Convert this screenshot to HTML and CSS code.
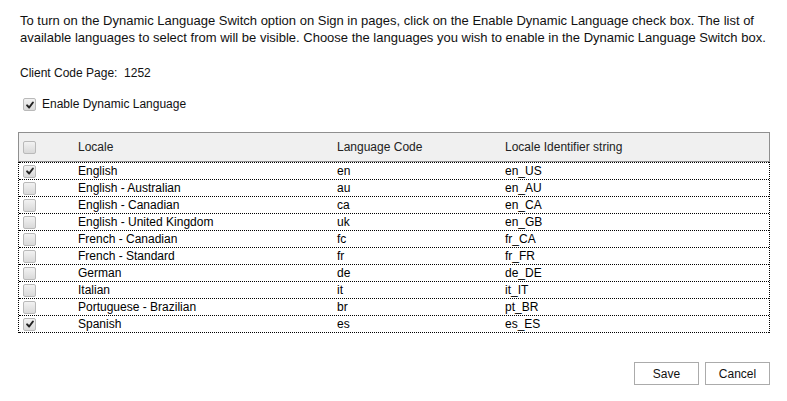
FILE: index.html
```html
<!DOCTYPE html>
<html>
<head>
<meta charset="utf-8">
<link rel="stylesheet" href="styles.css">
</head>
<body>
<div class="page">
  <p class="intro">To turn on the Dynamic Language Switch option on Sign in pages, click on the Enable Dynamic Language check box. The list of<br>available languages to select from will be visible. Choose the languages you wish to enable in the Dynamic Language Switch box.</p>
  <div class="codepage">Client Code Page:&nbsp; 1252</div>
  <label class="enable"><span class="cb checked"><svg viewBox="0 0 12 12"><path d="M2.5 6.5 L5 9 L9.5 3" /></svg></span>Enable Dynamic Language</label>

  <div class="table">
    <div class="thead">
      <div class="cell"><span class="cb"></span></div>
      <div class="cell">Locale</div>
      <div class="cell">Language Code</div>
      <div class="cell">Locale Identifier string</div>
    </div>
    <div class="tbody">
      <div class="row"><div class="cell"><span class="cb checked"><svg viewBox="0 0 12 12"><path d="M2.5 6.5 L5 9 L9.5 3" /></svg></span></div><div class="cell">English</div><div class="cell">en</div><div class="cell">en_US</div></div>
      <div class="row"><div class="cell"><span class="cb"></span></div><div class="cell">English - Australian</div><div class="cell">au</div><div class="cell">en_AU</div></div>
      <div class="row"><div class="cell"><span class="cb"></span></div><div class="cell">English - Canadian</div><div class="cell">ca</div><div class="cell">en_CA</div></div>
      <div class="row"><div class="cell"><span class="cb"></span></div><div class="cell">English - United Kingdom</div><div class="cell">uk</div><div class="cell">en_GB</div></div>
      <div class="row"><div class="cell"><span class="cb"></span></div><div class="cell">French - Canadian</div><div class="cell">fc</div><div class="cell">fr_CA</div></div>
      <div class="row"><div class="cell"><span class="cb"></span></div><div class="cell">French - Standard</div><div class="cell">fr</div><div class="cell">fr_FR</div></div>
      <div class="row"><div class="cell"><span class="cb"></span></div><div class="cell">German</div><div class="cell">de</div><div class="cell">de_DE</div></div>
      <div class="row"><div class="cell"><span class="cb"></span></div><div class="cell">Italian</div><div class="cell">it</div><div class="cell">it_IT</div></div>
      <div class="row"><div class="cell"><span class="cb"></span></div><div class="cell">Portuguese - Brazilian</div><div class="cell">br</div><div class="cell">pt_BR</div></div>
      <div class="row"><div class="cell"><span class="cb checked"><svg viewBox="0 0 12 12"><path d="M2.5 6.5 L5 9 L9.5 3" /></svg></span></div><div class="cell">Spanish</div><div class="cell">es</div><div class="cell">es_ES</div></div>
    </div>
  </div>

  <div class="actions">
    <button class="btn">Save</button>
    <button class="btn">Cancel</button>
  </div>
</div>
</body>
</html>
```
FILE: styles.css
```css
html, body {
  margin: 0;
  padding: 0;
  background: #fff;
}
body {
  font-family: "Liberation Sans", Arial, sans-serif;
  color: #000;
}
.page {
  width: 787px;
  padding: 0 18px 0 18px;
  box-sizing: border-box;
}
.intro {
  margin: 0;
  padding: 12px 0 0 2px;
  font-size: 13px;
  line-height: 17px;
  color: #111;
  white-space: nowrap;
}
.codepage {
  margin-top: 20px;
  padding-left: 2px;
  font-size: 12px;
  line-height: 15px;
  color: #111;
}
.enable {
  display: flex;
  align-items: center;
  gap: 6px;
  margin-top: 16px;
  padding-left: 5px;
  font-size: 12px;
  line-height: 15px;
  color: #111;
}
.cb {
  display: inline-flex;
  align-items: center;
  justify-content: center;
  width: 11px;
  height: 11px;
  border: 1px solid #b9b9b9;
  border-radius: 2px;
  background: linear-gradient(#f2f2f2, #d9d9d9);
  box-sizing: content-box;
}
.cb svg {
  width: 10px;
  height: 10px;
}
.cb svg path {
  fill: none;
  stroke: #222;
  stroke-width: 2.4;
  stroke-linecap: round;
  stroke-linejoin: round;
}
.table {
  margin-top: 20px;
  width: 752px;
}
.thead {
  display: grid;
  grid-template-columns: 59px 259px 168px 1fr;
  height: 28px;
  align-items: center;
  background: #f0f0f0;
  border: 1px solid #8f8f8f;
  font-size: 12px;
  color: #222;
}
.thead .cell:first-child {
  padding-left: 4px;
  display: flex;
}
.tbody {
  border-left: 1px dotted #000;
  border-right: 1px dotted #000;
}
.row {
  display: grid;
  grid-template-columns: 59px 259px 168px 1fr;
  height: 16px;
  align-items: center;
  border-top: 1px dotted #000;
  font-size: 12px;
  color: #000;
}
.row:last-child {
  border-bottom: 1px dotted #000;
}
.row .cell:first-child {
  padding-left: 4px;
  display: flex;
}
.actions {
  display: flex;
  justify-content: flex-end;
  gap: 6px;
  margin-top: 29px;
  width: 752px;
}
.btn {
  width: 65px;
  height: 23px;
  background: #fff;
  border: 1px solid #ababab;
  font-family: "Liberation Sans", Arial, sans-serif;
  font-size: 12px;
  color: #111;
  padding: 0;
}
```
